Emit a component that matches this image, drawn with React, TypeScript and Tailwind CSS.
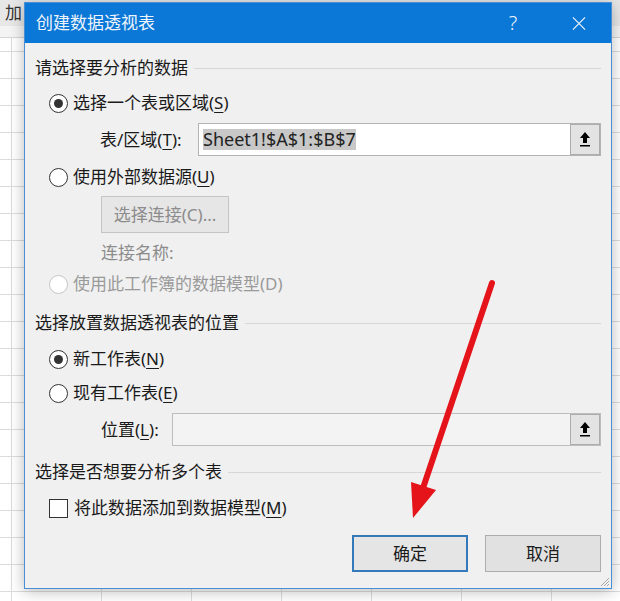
import React from "react";

const font = "font-['Noto_Sans','Noto_Sans_CJK_SC',sans-serif]";

const Radio = ({ checked, disabled }: { checked?: boolean; disabled?: boolean }) => (
  <span
    className={`flex h-[19px] w-[19px] shrink-0 items-center justify-center rounded-full border-[1.5px] bg-white ${
      disabled ? "border-[#c6c6c6]" : "border-[#333]"
    }`}
  >
    {checked && <span className="h-[9px] w-[9px] rounded-full bg-[#333]" />}
  </span>
);

const Header = ({ children }: { children: React.ReactNode }) => (
  <div className="mt-[var(--mt)] flex h-[24px] items-center gap-[6px]">
    <span className="whitespace-nowrap">{children}</span>
    <span className="h-px flex-1 bg-[#d7d7d7]" />
  </div>
);

const Key = ({ k }: { k: string }) => <span className="underline underline-offset-[3px]">{k}</span>;

const PickButton = () => (
  <div className="flex h-full w-[30px] items-center justify-center border border-[#adadad] bg-[#e3e3e3]">
    <svg width="12" height="17" viewBox="0 0 12 17">
      <path d="M6 1 L11 7 L8 7 L8 12 L4 12 L4 7 L1 7 Z" fill="#000" />
      <rect x="1" y="14" width="10" height="1.5" fill="#000" />
    </svg>
  </div>
);

export default function App() {
  return (
    <div className={`relative h-[601px] w-[620px] overflow-hidden bg-white ${font}`}>
      {/* spreadsheet behind */}
      <div className="flex h-[26px] items-center bg-[#e7e7e7] pl-[5px] text-[17px] leading-[20px] text-[#333]">加</div>
      <div className="h-[12px] border-b border-[#d6d6d6] bg-[#f4f4f4]" />
      <div className="h-[563px] bg-[linear-gradient(to_right,#dcdcdc_1px,transparent_1px),linear-gradient(to_bottom,#dcdcdc_1px,transparent_1px)] bg-size-[90px_27px] bg-position-[11px_13px]" />

      {/* dialog */}
      <div className="absolute left-[24px] top-[2px] flex h-[587px] w-[588px] flex-col border border-[#4a8ed3] bg-[#f0f0f0] text-[17px] text-[#1a1a1a] shadow-[0_2px_14px_rgba(0,0,0,0.28)]">
        <div className="flex h-[40px] shrink-0 items-center bg-[#0b78d7] pl-[11px] text-[#eef4fb]">
          <span className="text-[17px]">创建数据透视表</span>
          <span className="ml-auto w-[20px] text-center text-[20px] font-light">?</span>
          <span className="ml-[49px] mr-[25px] flex w-[14px] justify-center">
            <svg width="15" height="15" viewBox="0 0 15 15">
              <path d="M1 1 L14 14 M14 1 L1 14" stroke="#eef4fb" strokeWidth="1.3" />
            </svg>
          </span>
        </div>

        <div className="relative flex flex-1 flex-col px-[10px]">
          <div className="[--mt:13px]">
            <Header>请选择要分析的数据</Header>
          </div>
          <div className="mt-[8px] flex h-[30px] items-center gap-[5px] pl-[14px]">
            <Radio checked />
            <span>
              选择一个表或区域(<Key k="S" />)
            </span>
          </div>
          <div className="mt-[5px] flex h-[33px] items-center pl-[65px]">
            <span className="w-[98px] whitespace-nowrap">
              表/区域(<Key k="T" />):
            </span>
            <div className="flex h-full flex-1 items-center border border-[#b3b3b3] bg-white pl-[4px]">
              <span className="bg-[#c8c8c8] text-[18px] leading-[21px] text-[#222]">Sheet1!$A$1:$B$7</span>
              <div className="ml-auto h-full">
                <PickButton />
              </div>
            </div>
          </div>
          <div className="mt-[6px] flex h-[30px] items-center gap-[5px] pl-[14px]">
            <Radio />
            <span>
              使用外部数据源(<Key k="U" />)
            </span>
          </div>
          <div className="mt-[4px] pl-[66px]">
            <div className="flex h-[37px] w-[128px] items-center justify-center border border-[#c4c4c4] bg-[#e6e6e6] text-[#8c8c8c]">
              选择连接(C)...
            </div>
          </div>
          <div className="mt-[8px] flex h-[24px] items-center pl-[66px] text-[#8c8c8c]">连接名称:</div>
          <div className="mt-[4px] flex h-[30px] items-center gap-[5px] pl-[14px] text-[#9a9a9a]">
            <Radio disabled />
            <span>使用此工作簿的数据模型(D)</span>
          </div>
          <div className="[--mt:12px]">
            <Header>选择放置数据透视表的位置</Header>
          </div>
          <div className="mt-[9px] flex h-[30px] items-center gap-[5px] pl-[14px]">
            <Radio checked />
            <span>
              新工作表(<Key k="N" />)
            </span>
          </div>
          <div className="mt-[4px] flex h-[30px] items-center gap-[5px] pl-[14px]">
            <Radio />
            <span>
              现有工作表(<Key k="E" />)
            </span>
          </div>
          <div className="mt-[5px] flex h-[33px] items-center pl-[66px]">
            <span className="w-[71px] whitespace-nowrap">
              位置(<Key k="L" />):
            </span>
            <div className="flex h-full flex-1 items-center border border-[#bdbdbd] bg-[#f3f3f3]">
              <div className="ml-auto h-full">
                <PickButton />
              </div>
            </div>
          </div>
          <div className="[--mt:14px]">
            <Header>选择是否想要分析多个表</Header>
          </div>
          <div className="mt-[9px] flex h-[30px] items-center gap-[6px] pl-[14px]">
            <span className="h-[19px] w-[19px] border border-[#333] bg-white" />
            <span>
              将此数据添加到数据模型(<Key k="M" />)
            </span>
          </div>
          <div className="mt-[12px] flex justify-end gap-[17px]">
            <div className="flex h-[37px] w-[116px] items-center justify-center border-2 border-[#3479b9] bg-[#e5e5e5]">
              确定
            </div>
            <div className="flex h-[37px] w-[116px] items-center justify-center border border-[#adadad] bg-[#e1e1e1]">
              取消
            </div>
          </div>

          <svg className="absolute bottom-[1px] right-[1px]" width="11" height="11" viewBox="0 0 11 11">
            <path d="M10 2 L2 10 M10 5 L5 10 M10 8 L8 10" stroke="#a8a8a8" strokeWidth="1" />
          </svg>
        </div>
      </div>

      {/* red annotation arrow */}
      <svg className="pointer-events-none absolute inset-0" width="620" height="601" viewBox="0 0 620 601">
        <line x1="492" y1="283" x2="420" y2="497" stroke="#e4141a" strokeWidth="6" strokeLinecap="round" />
        <polygon points="413,518 411,482 436,490" fill="#e4141a" />
      </svg>
    </div>
  );
}
